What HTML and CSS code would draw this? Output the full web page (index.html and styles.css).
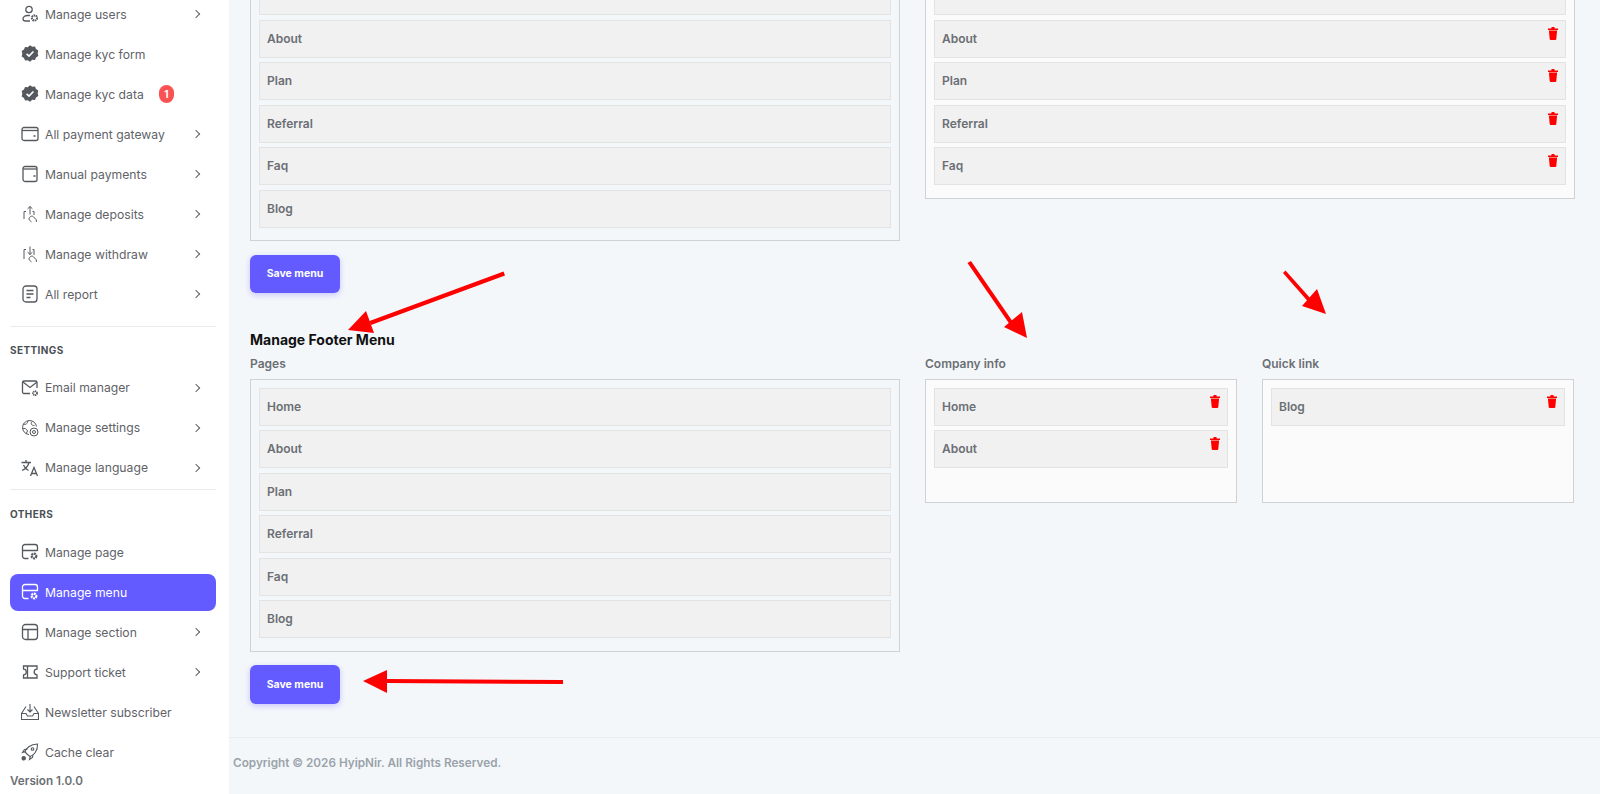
FILE: index.html
```html
<!DOCTYPE html>
<html lang="en">
<head>
<meta charset="utf-8">
<title>Manage menu</title>
<link rel="stylesheet" href="styles.css">
</head>
<body>
<div class="shell">
  <aside class="sidebar">
    <nav class="nav nav-first">
      <a class="item"><svg class="ic" viewBox="0 0 18 18"><use href="#i-user"/></svg><span>Manage users</span><i class="chev"></i></a>
      <a class="item"><svg class="ic" viewBox="0 0 18 18"><use href="#i-check"/></svg><span>Manage kyc form</span></a>
      <a class="item"><svg class="ic" viewBox="0 0 18 18"><use href="#i-check"/></svg><span>Manage kyc data</span><b class="badge">1</b></a>
      <a class="item"><svg class="ic" viewBox="0 0 18 18"><use href="#i-card"/></svg><span>All payment gateway</span><i class="chev"></i></a>
      <a class="item"><svg class="ic" viewBox="0 0 18 18"><use href="#i-wallet"/></svg><span>Manual payments</span><i class="chev"></i></a>
      <a class="item"><svg class="ic" viewBox="0 0 18 18"><use href="#i-up"/></svg><span>Manage deposits</span><i class="chev"></i></a>
      <a class="item"><svg class="ic" viewBox="0 0 18 18"><use href="#i-down"/></svg><span>Manage withdraw</span><i class="chev"></i></a>
      <a class="item"><svg class="ic" viewBox="0 0 18 18"><use href="#i-report"/></svg><span>All report</span><i class="chev"></i></a>
    </nav>
    <h6 class="group">SETTINGS</h6>
    <nav class="nav nav-second">
      <a class="item"><svg class="ic" viewBox="0 0 18 18"><use href="#i-mail"/></svg><span>Email manager</span><i class="chev"></i></a>
      <a class="item"><svg class="ic" viewBox="0 0 18 18"><use href="#i-globe"/></svg><span>Manage settings</span><i class="chev"></i></a>
      <a class="item"><svg class="ic" viewBox="0 0 18 18"><use href="#i-lang"/></svg><span>Manage language</span><i class="chev"></i></a>
    </nav>
    <h6 class="group group-others">OTHERS</h6>
    <nav class="nav">
      <a class="item"><svg class="ic" viewBox="0 0 18 18"><use href="#i-page"/></svg><span>Manage page</span></a>
      <a class="item active"><svg class="ic" viewBox="0 0 18 18"><use href="#i-page"/></svg><span>Manage menu</span></a>
      <a class="item"><svg class="ic" viewBox="0 0 18 18"><use href="#i-layout"/></svg><span>Manage section</span><i class="chev"></i></a>
      <a class="item"><svg class="ic" viewBox="0 0 18 18"><use href="#i-ticket"/></svg><span>Support ticket</span><i class="chev"></i></a>
      <a class="item"><svg class="ic" viewBox="0 0 18 18"><use href="#i-inbox"/></svg><span>Newsletter subscriber</span></a>
      <a class="item"><svg class="ic" viewBox="0 0 18 18"><use href="#i-rocket"/></svg><span>Cache clear</span></a>
    </nav>
    <p class="version">Version 1.0.0</p>
  </aside>

  <main class="main">
    <div class="content">
      <section class="row row-top">
        <div class="col">
          <ul class="box">
            <li class="entry">Home</li>
            <li class="entry">About</li>
            <li class="entry">Plan</li>
            <li class="entry">Referral</li>
            <li class="entry">Faq</li>
            <li class="entry">Blog</li>
          </ul>
          <button class="save">Save menu</button>
        </div>
        <div class="col">
          <ul class="box filled">
            <li class="entry">Home<svg class="trash" viewBox="0 0 10 13"><use href="#i-trash"/></svg></li>
            <li class="entry">About<svg class="trash" viewBox="0 0 10 13"><use href="#i-trash"/></svg></li>
            <li class="entry">Plan<svg class="trash" viewBox="0 0 10 13"><use href="#i-trash"/></svg></li>
            <li class="entry">Referral<svg class="trash" viewBox="0 0 10 13"><use href="#i-trash"/></svg></li>
            <li class="entry">Faq<svg class="trash" viewBox="0 0 10 13"><use href="#i-trash"/></svg></li>
          </ul>
        </div>
      </section>

      <h2 class="heading">Manage Footer Menu</h2>
      <section class="row row-footer">
        <div class="col">
          <h3 class="label">Pages</h3>
          <ul class="box">
            <li class="entry">Home</li>
            <li class="entry">About</li>
            <li class="entry">Plan</li>
            <li class="entry">Referral</li>
            <li class="entry">Faq</li>
            <li class="entry">Blog</li>
          </ul>
          <button class="save">Save menu</button>
        </div>
        <div class="col">
          <h3 class="label">Company info</h3>
          <ul class="box filled short">
            <li class="entry">Home<svg class="trash" viewBox="0 0 10 13"><use href="#i-trash"/></svg></li>
            <li class="entry">About<svg class="trash" viewBox="0 0 10 13"><use href="#i-trash"/></svg></li>
          </ul>
        </div>
        <div class="col">
          <h3 class="label">Quick link</h3>
          <ul class="box filled short">
            <li class="entry">Blog<svg class="trash" viewBox="0 0 10 13"><use href="#i-trash"/></svg></li>
          </ul>
        </div>
      </section>
    </div>
    <footer class="footer">Copyright © 2026 HyipNir. All Rights Reserved.</footer>
  </main>

  <svg class="arrows" viewBox="0 0 1600 794" aria-hidden="true">
    <g fill="#f00" stroke="none">
      <path d="M503.500 271.500 L505 275.500 L371 325 L369.500 321 Z"/>
      <path d="M348 330 L366 311 L374 333 Z"/>
      <path d="M967.500 263 L971 261 L1013 322 L1009.500 324 Z"/>
      <path d="M1027 338 L1004 327 L1022 312 Z"/>
      <path d="M1283 273 L1285.500 270.500 L1311 299 L1308 301.500 Z"/>
      <path d="M1326 314 L1302 306 L1317 289 Z"/>
      <path d="M563 680 L563 684 L385 683 L385 679 Z"/>
      <path d="M363 681 L387 670 L387 693 Z"/>
    </g>
  </svg>
</div>

<svg class="defs" aria-hidden="true">
  <defs>
    <g id="i-user" fill="none" stroke="currentColor" stroke-width="1.300">
      <circle cx="8" cy="4.500" r="3.200"/><path d="M9 10.500H6.500C4 10.500 2 12 2 13.800 2 15.200 3 16 4.500 16H9"/><circle cx="13.500" cy="13" r="2.600" stroke-width="2" stroke-dasharray="1.600 .6"/>
    </g>
    <g id="i-check">
      <path fill="currentColor" d="M9 .3l2.300 1.500 2.700-.2 1 2.500 2.300 1.500-.6 2.700.6 2.700-2.300 1.500-1 2.500-2.700-.2L9 16.800l-2.300-1.500-2.700.2-1-2.500L.7 11.500 1.300 8.800.7 6.100l2.300-1.500 1-2.500 2.700.2z"/>
      <path fill="none" stroke="#fff" stroke-width="1.600" d="M5.600 8.800l2.400 2.300 4.400-4.600"/>
    </g>
    <g id="i-card" fill="none" stroke="currentColor" stroke-width="1.300">
      <rect x="1" y="2.500" width="16" height="13" rx="2"/><path d="M1 5.500h16"/><path d="M12.500 11h2" stroke-width="1.600"/>
    </g>
    <g id="i-wallet" fill="none" stroke="currentColor" stroke-width="1.300">
      <rect x="2" y="1.500" width="14" height="15" rx="2"/><path d="M2 4h14"/><path d="M12.500 11h2" stroke-width="1.600"/>
    </g>
    <g id="i-up" fill="none" stroke="currentColor" stroke-width="1">
      <path d="M3 14V6.500h2M9 9.500V1.500M6.600 3.800L9 1.500l2.400 2.300M11.500 6.500H13V10"/><path d="M8 14c0-2.200 2.800-3.800 4.300-2.400l3 3.200V17M10.500 17c-.8-1-2.300-1.500-2.500-3"/>
    </g>
    <g id="i-down" fill="none" stroke="currentColor" stroke-width="1">
      <path d="M3 14V4.500h2M9 1.500V9.500M6.600 7.200L9 9.500l2.400-2.300M11.500 4.500H13V10"/><path d="M8 14c0-2.200 2.800-3.800 4.300-2.400l3 3.200V17M10.500 17c-.8-1-2.300-1.500-2.500-3"/>
    </g>
    <g id="i-report" fill="none" stroke="currentColor" stroke-width="1.300">
      <rect x="2" y="1" width="14" height="16" rx="3"/><path d="M5.500 5.500h7M5.500 9h7M5.500 12.500h4"/>
    </g>
    <g id="i-mail" fill="none" stroke="currentColor" stroke-width="1.300">
      <path d="M9 14.500H3a1.500 1.500 0 0 1-1.500-1.500V3.500A1.500 1.500 0 0 1 3 2h11.500A1.500 1.500 0 0 1 16 3.500V9"/><path d="M2 3l7 5.500L16 3"/><circle cx="14" cy="14.200" r="2" stroke-width="1.800" stroke-dasharray="1.200 .5"/>
    </g>
    <g id="i-globe" fill="none" stroke="currentColor" stroke-width="1">
      <path d="M8 15.500A7 7 0 1 1 15.500 7.500"/><path d="M2 5c3 1 4 0 5-3M1.500 9.500c2-.5 4 0 5 2.500l-1.500 3M11 2.500c-1.500 2-1 4 2.500 4"/><circle cx="13" cy="13" r="4"/><circle cx="13" cy="13" r="1.500"/>
    </g>
    <g id="i-lang" fill="none" stroke="currentColor" stroke-width="1.300">
      <path d="M.5 3.500h9.500M5 1v2.500M8 3.500C7 7.500 4.500 10 1 11.500M2.500 6c1 2.500 3 4.500 5 5.500"/><path d="M9.500 17L13 8.500l3.500 8.500M10.600 14.500h5"/>
    </g>
    <g id="i-page" fill="none" stroke="currentColor" stroke-width="1.300">
      <path d="M7.500 15.500H4a2.500 2.500 0 0 1-2.500-2.500V4A2.500 2.500 0 0 1 4 1.500h10A2.500 2.500 0 0 1 16.500 4v4M1.500 7.500h15"/><circle cx="13" cy="13" r="2.300" stroke-width="2.300" stroke-dasharray="1.800 .6"/>
    </g>
    <g id="i-layout" fill="none" stroke="currentColor" stroke-width="1.300">
      <rect x="1.500" y="1.500" width="15" height="15" rx="3"/><path d="M1.500 6.500h15M7 6.500v10"/>
    </g>
    <g id="i-ticket" fill="none" stroke="currentColor" stroke-width="1.300">
      <path d="M2.500 3h13.500v3.200a2.800 2.800 0 0 0 0 5.600V15H2.500v-3.200a2.800 2.800 0 0 0 0-5.600z"/><path d="M6.500 3v12"/>
    </g>
    <g id="i-inbox" fill="none" stroke="currentColor" stroke-width="1.100">
      <path d="M5 3.500L.5 10.500v6h17v-6L13 3.500M.5 10.500H5l1.500 2.500h5l1.500-2.500h4.500"/><path d="M9 1v8M6.500 6.500L9 9l2.500-2.500"/>
    </g>
    <g id="i-rocket" fill="none" stroke="currentColor" stroke-width="1.100">
      <path d="M6.500 11.500L4 9c1-3.500 5-8 12.500-8C17 8 12.500 12.500 9 13.500z"/><circle cx="11.500" cy="6" r="1.300"/><path d="M4.500 8.500l-3 1 2-3 3-.5M9.500 13l-1 3.500 3-2 .5-3"/><circle cx="2.700" cy="15.300" r="1.700" fill="currentColor"/>
    </g>
    <g id="i-trash">
      <path fill="currentColor" d="M0 1.500h3.200L3.700 0h2.600l.5 1.500H10V3H0z"/><path fill="currentColor" d="M.9 3.600h8.200L8.300 12a1.100 1.100 0 0 1-1.100 1H2.800a1.100 1.100 0 0 1-1.100-1z"/>
    </g>
  </defs>
</svg>
</body>
</html>
```

FILE: styles.css
```css
* { box-sizing: border-box; }

html, body {
  margin: 0;
  height: 100%;
  overflow: hidden;
}

body {
  font-family: "Inter", "Noto Sans", sans-serif;
  color: #5f6368;
  background: #f4f7fa;
}

.shell {
  position: relative;
  display: flex;
  height: 794px;
  overflow: hidden;
}

.defs { width: 0; height: 0; position: absolute; }

.arrows {
  position: absolute;
  inset: 0;
  width: 1600px;
  height: 794px;
  pointer-events: none;
}

/* Sidebar */
.sidebar {
  width: 229px;
  flex: none;
  background: #fff;
  padding: 0 13px 0 10px;
  overflow: hidden;
}

.nav {
  display: flex;
  flex-direction: column;
  gap: 3.330px;
  padding-bottom: 13px;
}

.nav-first {
  margin-top: -4px;
  padding-bottom: 13.700px;
  border-bottom: 1px solid #e9ebec;
}

.nav-second {
  padding-bottom: 3px;
  border-bottom: 1px solid #e9ebec;
}

.item {
  display: flex;
  align-items: center;
  height: 36.670px;
  padding: 0 12px 0 11px;
  border-radius: 8px;
  font-size: 12.200px;
  font-weight: 400;
  color: #5f6368;
}

.item.active { background: #635bff; color: #fff; }

.ic {
  width: 18px;
  height: 18px;
  flex: none;
  margin-right: 6px;
  color: #55595e;
}
.item.active .ic { color: #fff; }

.chev {
  margin-left: auto;
  margin-right: 5px;
  width: 6px;
  height: 6px;
  border-top: 1.500px solid #5f6368;
  border-right: 1.500px solid #5f6368;
  transform: rotate(45deg);
}

.badge {
  width: 15px;
  height: 18px;
  margin-left: 15px;
  border-radius: 8px;
  background: #fa5252;
  color: #fff;
  font-size: 10px;
  font-weight: 700;
  line-height: 18px;
  text-align: center;
}

.group {
  margin: 0;
  padding: 16px 0 12px;
  font-size: 10px;
  font-weight: 700;
  letter-spacing: .4px;
  line-height: 14px;
  color: #4a4f54;
}

.group-others { padding: 17px 0 13px; }

.version {
  margin: -9px 0 0;
  font-size: 11.700px;
  font-weight: 600;
  color: #6b6f74;
}

/* Main */
.main {
  flex: 1;
  display: flex;
  flex-direction: column;
  min-width: 0;
}

.content {
  flex: 1;
  padding: 0 25px 0 21px;
}

.row {
  display: grid;
  gap: 25px;
  align-items: start;
}

.row-top {
  grid-template-columns: 650px 650px;
  margin-top: -32px;
}

.row-footer {
  grid-template-columns: 650px 312px 312px;
  margin-top: 5.500px;
}

.box {
  list-style: none;
  margin: 0;
  padding: 8px 8px 12.500px;
  border: 1px solid #cfd2d4;
  display: flex;
  flex-direction: column;
  gap: 4.500px;
}

.box.filled { background: #fbfbfb; }
.box.short { height: 124.500px; }

.entry {
  position: relative;
  height: 38px;
  padding-left: 7px;
  background: #f1f1f1;
  border: 1px solid #e2e3e3;
  font-size: 12px;
  font-weight: 600;
  line-height: 36px;
  color: #6b6f74;
}

.trash {
  position: absolute;
  top: 6px;
  right: 7px;
  width: 10px;
  height: 13px;
  color: #f00;
}

.save {
  display: block;
  width: 90px;
  height: 38.500px;
  margin-top: 13.500px;
  padding: 0;
  border: 0;
  border-radius: 6px;
  background: #635bff;
  box-shadow: 0 2px 6px rgba(99, 91, 255, .3);
  color: #fff;
  font: 700 10.500px "Inter", sans-serif;
}

.heading {
  margin: 38px 0 0;
  font-size: 14px;
  font-weight: 700;
  line-height: 18px;
  color: #111;
}

.label {
  margin: 0 0 7px;
  font-size: 12px;
  font-weight: 600;
  line-height: 17px;
  color: #6b6f74;
}

.footer {
  height: 57.500px;
  flex: none;
  padding: 0 0 0 4px;
  border-top: 1px solid #e9edf0;
  font-size: 11.750px;
  font-weight: 600;
  line-height: 51px;
  color: #9aa3ab;
}
```
